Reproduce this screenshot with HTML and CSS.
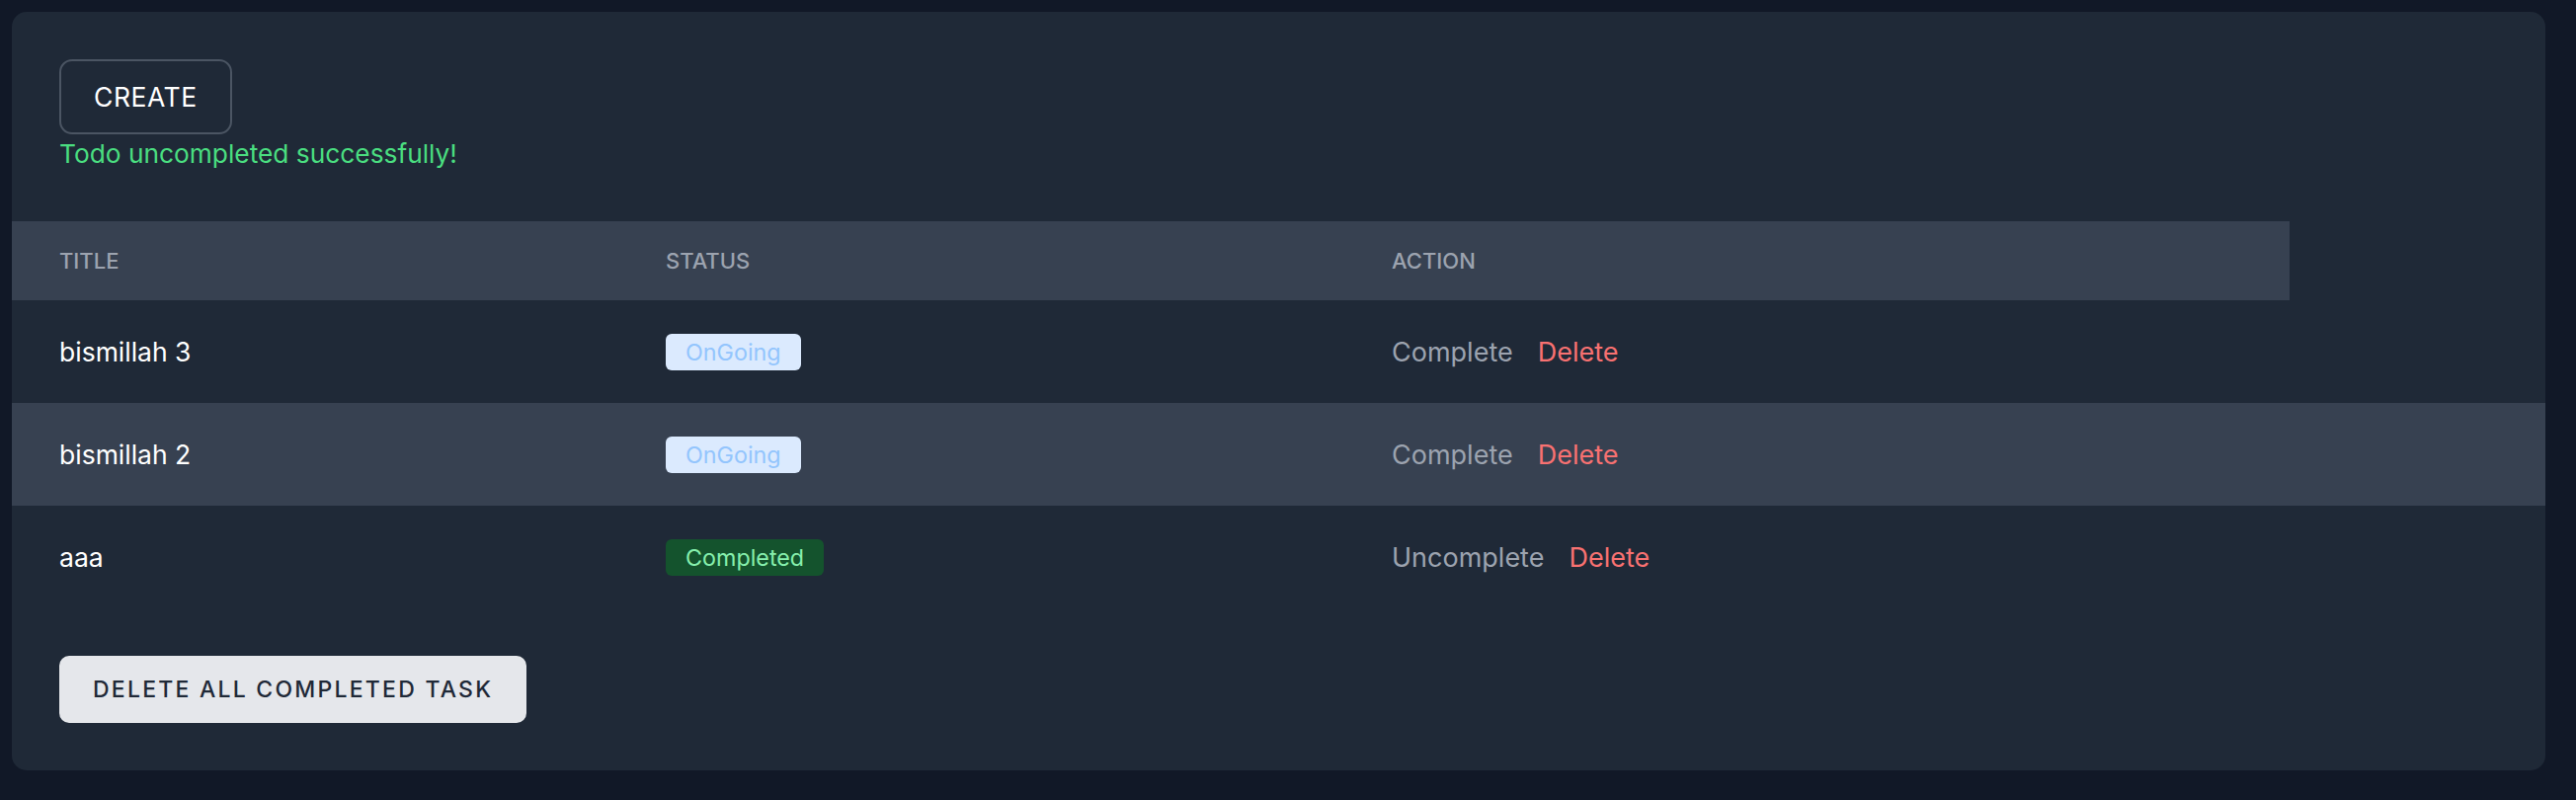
FILE: index.html
```html
<!DOCTYPE html>
<html lang="en">
<head>
<meta charset="utf-8">
<title>Todos</title>
<link rel="stylesheet" href="styles.css">
</head>
<body>
<main class="card">
  <div class="top">
    <button class="create-btn">CREATE</button>
    <p class="flash">Todo uncompleted successfully!</p>
  </div>
  <div class="table">
    <div class="thead">
      <div class="th">Title</div>
      <div class="th">Status</div>
      <div class="th">Action</div>
    </div>
    <div class="row">
      <div class="cell title">bismillah 3</div>
      <div class="cell"><span class="badge ongoing">OnGoing</span></div>
      <div class="cell actions"><a class="act">Complete</a><a class="del">Delete</a></div>
    </div>
    <div class="row alt">
      <div class="cell title">bismillah 2</div>
      <div class="cell"><span class="badge ongoing">OnGoing</span></div>
      <div class="cell actions"><a class="act">Complete</a><a class="del">Delete</a></div>
    </div>
    <div class="row">
      <div class="cell title">aaa</div>
      <div class="cell"><span class="badge done">Completed</span></div>
      <div class="cell actions"><a class="act">Uncomplete</a><a class="del">Delete</a></div>
    </div>
  </div>
  <div class="bottom">
    <button class="delete-all">DELETE ALL COMPLETED TASK</button>
  </div>
</main>
</body>
</html>
```
FILE: styles.css
```css
html, body {
  margin: 0;
  padding: 0;
}
body {
  background: #111827;
  font-family: "Inter", "Liberation Sans", sans-serif;
  min-height: 810px;
  padding: 12px 31px 30px 12px;
  box-sizing: border-box;
}
.card {
  background: #1f2937;
  border-radius: 15px;
  padding: 48px 0;
  overflow: hidden;
}
.top {
  padding: 0 48px;
}
.create-btn {
  display: block;
  box-sizing: border-box;
  height: 76px;
  padding: 0 33px;
  background: transparent;
  border: 2px solid #4b5563;
  border-radius: 13px;
  color: #ffffff;
  font-family: inherit;
  font-size: 26.5px;
  font-weight: 400;
  letter-spacing: 0.02em;
}
.flash {
  margin: 0 0 48px;
  color: #4ade80;
  font-size: 26.3px;
  line-height: 40px;
}
.thead,
.row {
  display: grid;
  grid-template-columns: 614px 735px 957px;
  align-items: center;
}
.thead {
  width: 2306px;
  height: 80px;
  background: #374151;
}
.th {
  padding-left: 48px;
  color: #9ca3af;
  font-size: 22px;
  font-weight: 500;
  text-transform: uppercase;
}
.row {
  height: 104px;
}
.row.alt {
  background: #374151;
}
.cell {
  padding-left: 48px;
  font-size: 26.5px;
}
.title {
  color: #ffffff;
}
.badge {
  display: inline-block;
  padding: 0 20px;
  height: 37px;
  line-height: 37px;
  border-radius: 6px;
  font-size: 23.3px;
}
.badge.ongoing {
  background: #dbeafe;
  color: #93c5fd;
}
.badge.done {
  background: #14532d;
  color: #86efac;
}
.actions {
  display: flex;
  gap: 25px;
  font-size: 27px;
}
.act {
  color: #9ca3af;
}
.del {
  color: #f87171;
}
.bottom {
  padding: 48px 48px 0;
}
.delete-all {
  display: block;
  height: 68px;
  padding: 0 34px;
  background: #e5e7eb;
  color: #1f2937;
  border: none;
  border-radius: 10px;
  font-family: inherit;
  font-size: 23px;
  font-weight: 500;
  letter-spacing: 0.097em;
}
```
